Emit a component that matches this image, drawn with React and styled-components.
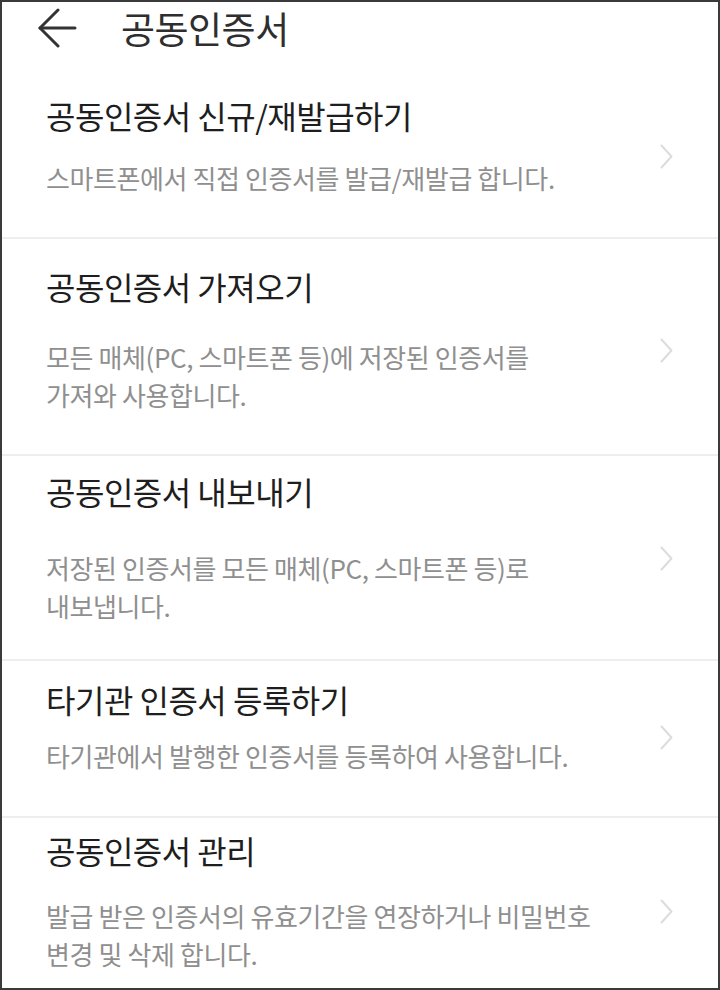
import React from 'react'
import styled, { createGlobalStyle } from 'styled-components'

const GlobalStyle = createGlobalStyle`
    html, body {
        margin: 0;
        padding: 0;
        background: #fff;
    }
    body {
        font-family: "Noto Sans CJK KR", "Noto Sans", sans-serif;
    }
`

const Screen = styled.div`
    box-sizing: border-box;
    width: 720px;
    height: 990px;
    border: 2px solid #3a3a3a;
    overflow: hidden;
    background: #fff;
`

const TopBar = styled.header`
    display: flex;
    align-items: center;
    height: 52px;
    padding-left: 35px;
    gap: 44px;
`

const BackButton = styled.button`
    display: flex;
    padding: 0;
    border: 0;
    background: none;
    cursor: pointer;
`

const PageTitle = styled.h1`
    margin: 0;
    font-size: 37px;
    font-weight: 400;
    letter-spacing: -0.5px;
    line-height: 52px;
    color: #2e2e2e;
`

const Menu = styled.ul`
    list-style: none;
    margin: 0;
    padding: 0;
`

const MenuItem = styled.li`
    display: flex;
    align-items: center;
    padding: ${p => p.$top}px 45px ${p => p.$bottom}px 44px;
    border-bottom: ${p => (p.$last ? 'none' : '2px solid #eeeeee')};
`

const TextBlock = styled.div`
    flex: 1;
    min-width: 0;
`

const ItemTitle = styled.div`
    font-size: 32px;
    line-height: 40px;
    letter-spacing: -0.5px;
    color: #1e1e1e;
    white-space: nowrap;
`

const ItemDesc = styled.p`
    margin: ${p => p.$gap}px 0 0;
    font-size: 26px;
    line-height: 38px;
    letter-spacing: -0.4px;
    color: #8f8f8f;
    white-space: nowrap;
`

const Chevron = styled.svg`
    flex: none;
    width: 13px;
    height: 25px;
    margin-top: 20px;
`

const items = [
    {
        title: '공동인증서 신규/재발급하기',
        desc: ['스마트폰에서 직접 인증서를 발급/재발급 합니다.'],
        top: 41, gap: 24, bottom: 40,
    },
    {
        title: '공동인증서 가져오기',
        desc: ['모든 매체(PC, 스마트폰 등)에 저장된 인증서를', '가져와 사용합니다.'],
        top: 27, gap: 32, bottom: 40,
    },
    {
        title: '공동인증서 내보내기',
        desc: ['저장된 인증서를 모든 매체(PC, 스마트폰 등)로', '내보냅니다.'],
        top: 15, gap: 38, bottom: 34,
    },
    {
        title: '타기관 인증서 등록하기',
        desc: ['타기관에서 발행한 인증서를 등록하여 사용합니다.'],
        top: 18, gap: 18, bottom: 41,
    },
    {
        title: '공동인증서 관리',
        desc: ['발급 받은 인증서의 유효기간을 연장하거나 비밀번호', '변경 및 삭제 합니다.'],
        top: 12, gap: 27, bottom: 64,
    },
]

const BackArrow = () =>
    <svg width="40" height="40" viewBox="0 0 40 40" fill="none" stroke="#333" strokeWidth="3" strokeLinecap="round" strokeLinejoin="round">
        <path d="M3 20H38" />
        <path d="M21 2L3 20L21 38" />
    </svg>

const App = () => {
    return (
        <Screen>
            <GlobalStyle />
            <TopBar>
                <BackButton aria-label="뒤로">
                    <BackArrow />
                </BackButton>
                <PageTitle>공동인증서</PageTitle>
            </TopBar>
            <Menu>
                {items.map((_, key) =>
                    <MenuItem key={key} $top={_.top} $bottom={_.bottom} $last={key === items.length - 1}>
                        <TextBlock>
                            <ItemTitle>{_.title}</ItemTitle>
                            <ItemDesc $gap={_.gap}>
                                {_.desc.map((line, i) =>
                                    <React.Fragment key={i}>{i > 0 && <br />}{line}</React.Fragment>)}
                            </ItemDesc>
                        </TextBlock>
                        <Chevron viewBox="0 0 13 25" fill="none" stroke="#dcdcdc" strokeWidth="2" strokeLinecap="round" strokeLinejoin="round">
                            <path d="M1.5 1.5L11.5 12.5L1.5 23.5" />
                        </Chevron>
                    </MenuItem>)}
            </Menu>
        </Screen>
    )
}

export default App
